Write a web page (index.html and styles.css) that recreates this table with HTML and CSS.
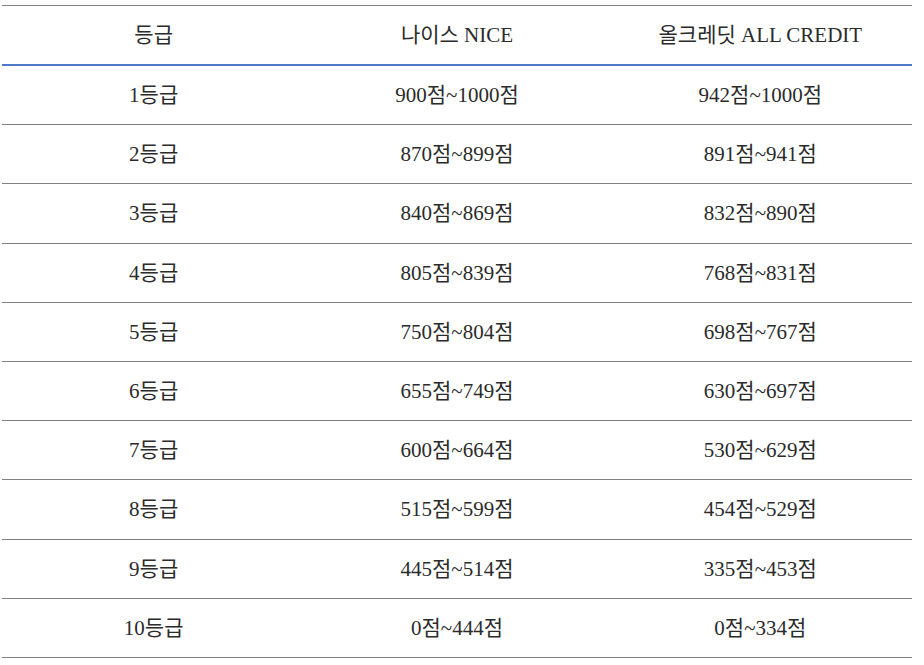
FILE: index.html
```html
<!DOCTYPE html>
<html lang="ko">
<head>
<meta charset="utf-8">
<link rel="stylesheet" href="styles.css">
</head>
<body>
<table class="grade-table">
  <thead>
    <tr><th>등급</th><th>나이스 NICE</th><th>올크레딧 ALL CREDIT</th></tr>
  </thead>
  <tbody>
    <tr><td>1등급</td><td>900점~1000점</td><td>942점~1000점</td></tr>
    <tr><td>2등급</td><td>870점~899점</td><td>891점~941점</td></tr>
    <tr><td>3등급</td><td>840점~869점</td><td>832점~890점</td></tr>
    <tr><td>4등급</td><td>805점~839점</td><td>768점~831점</td></tr>
    <tr><td>5등급</td><td>750점~804점</td><td>698점~767점</td></tr>
    <tr><td>6등급</td><td>655점~749점</td><td>630점~697점</td></tr>
    <tr><td>7등급</td><td>600점~664점</td><td>530점~629점</td></tr>
    <tr><td>8등급</td><td>515점~599점</td><td>454점~529점</td></tr>
    <tr><td>9등급</td><td>445점~514점</td><td>335점~453점</td></tr>
    <tr><td>10등급</td><td>0점~444점</td><td>0점~334점</td></tr>
  </tbody>
</table>
</body>
</html>
```
FILE: styles.css
```css
html, body {
  margin: 0;
  padding: 0;
  background: #ffffff;
}
body {
  padding: 5px 0 0 2px;
  font-family: "Liberation Serif", "Noto Sans CJK KR", serif;
  color: #2b2b2b;
}
.grade-table {
  width: 910px;
  border-collapse: separate;
  border-spacing: 0;
  table-layout: fixed;
}
.grade-table th,
.grade-table td {
  text-align: center;
  font-size: 21px;
  line-height: 24px;
  font-weight: normal;
  padding: 0;
  box-sizing: border-box;
}
.grade-table th {
  height: 61px;
  border-top: 1px solid #808080;
  border-bottom: 2px solid #4d79c7;
}
.grade-table td {
  height: 59.2px;
  border-bottom: 1px solid #808080;
}
```
